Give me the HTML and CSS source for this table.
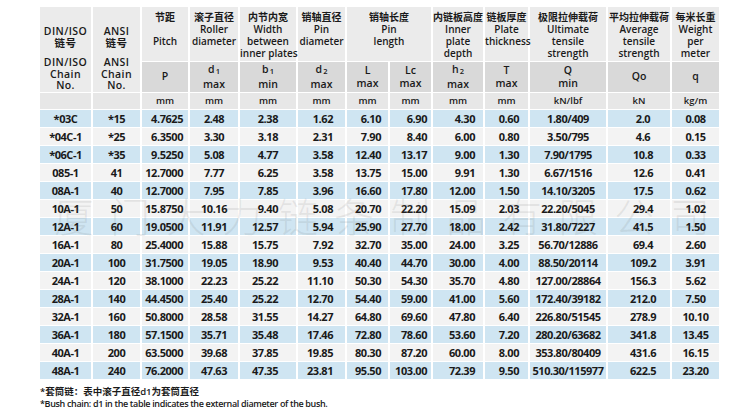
FILE: index.html
```html
<!DOCTYPE html>
<html lang="zh-CN">
<head>
<meta charset="utf-8">
<title>Chain specification</title>
<link rel="stylesheet" href="styles.css">
</head>
<body>
<div class="page">
  <div class="sheet">
    <table class="spec">
      <colgroup>
        <col class="w53"><col class="w49"><col class="w48"><col class="w50"><col class="w58"><col class="w49"><col class="w43"><col class="w43"><col class="w52"><col class="w45"><col class="w78"><col class="w64"><col class="w47">
      </colgroup>
      <thead>
        <tr class="hr1">
          <th rowspan="2" class="idcell">
            <div class="blk"><span class="ln">DIN/ISO</span><span class="ln">链号</span></div>
            <div class="blk low"><span class="ln">DIN/ISO</span><span class="ln">Chain</span><span class="ln">No.</span></div>
          </th>
          <th rowspan="2" class="idcell">
            <div class="blk"><span class="ln">ANSI</span><span class="ln">链号</span></div>
            <div class="blk low"><span class="ln">ANSI</span><span class="ln">Chain</span><span class="ln">No.</span></div>
          </th>
          <th><span class="ln">节距</span><span class="ln">&nbsp;</span><span class="ln">Pitch</span></th>
          <th><span class="ln">滚子直径</span><span class="ln">Roller</span><span class="ln">diameter</span></th>
          <th><span class="ln">内节内宽</span><span class="ln">Width</span><span class="ln">between</span><span class="ln">inner plates</span></th>
          <th><span class="ln">销轴直径</span><span class="ln">Pin</span><span class="ln">diameter</span></th>
          <th colspan="2"><span class="ln">销轴长度</span><span class="ln">Pin</span><span class="ln">length</span></th>
          <th><span class="ln">内链板高度</span><span class="ln">Inner</span><span class="ln">plate</span><span class="ln">depth</span></th>
          <th><span class="ln">链板厚度</span><span class="ln">Plate</span><span class="ln">thickness</span></th>
          <th><span class="ln">极限拉伸载荷</span><span class="ln">Ultimate</span><span class="ln">tensile</span><span class="ln">strength</span></th>
          <th><span class="ln">平均拉伸载荷</span><span class="ln">Average</span><span class="ln">tensile</span><span class="ln">strength</span></th>
          <th><span class="ln">每米长重</span><span class="ln">Weight</span><span class="ln">per</span><span class="ln">meter</span></th>
        </tr>
        <tr class="hr2">
          <th><span class="ln">P</span></th>
          <th><span class="ln">d<span class="sb">1</span></span><span class="ln">max</span></th>
          <th><span class="ln">b<span class="sb">1</span></span><span class="ln">min</span></th>
          <th><span class="ln">d<span class="sb">2</span></span><span class="ln">max</span></th>
          <th><span class="ln">L</span><span class="ln">max</span></th>
          <th><span class="ln">Lc</span><span class="ln">max</span></th>
          <th><span class="ln">h<span class="sb">2</span></span><span class="ln">max</span></th>
          <th><span class="ln">T</span><span class="ln">max</span></th>
          <th><span class="ln">Q</span><span class="ln">min</span></th>
          <th><span class="ln">Qo</span></th>
          <th><span class="ln">q</span></th>
        </tr>
        <tr class="hr3">
          <th></th><th></th>
          <th>mm</th><th>mm</th><th>mm</th><th>mm</th><th>mm</th><th>mm</th><th>mm</th><th>mm</th>
          <th>kN/lbf</th><th>kN</th><th>kg/m</th>
        </tr>
      </thead>
      <tbody>
        <tr><td>*03C</td><td>*15</td><td>4.7625</td><td>2.48</td><td>2.38</td><td>1.62</td><td>6.10</td><td>6.90</td><td>4.30</td><td>0.60</td><td>1.80/409</td><td>2.0</td><td>0.08</td></tr>
        <tr><td>*04C-1</td><td>*25</td><td>6.3500</td><td>3.30</td><td>3.18</td><td>2.31</td><td>7.90</td><td>8.40</td><td>6.00</td><td>0.80</td><td>3.50/795</td><td>4.6</td><td>0.15</td></tr>
        <tr><td>*06C-1</td><td>*35</td><td>9.5250</td><td>5.08</td><td>4.77</td><td>3.58</td><td>12.40</td><td>13.17</td><td>9.00</td><td>1.30</td><td>7.90/1795</td><td>10.8</td><td>0.33</td></tr>
        <tr><td>085-1</td><td>41</td><td>12.7000</td><td>7.77</td><td>6.25</td><td>3.58</td><td>13.75</td><td>15.00</td><td>9.91</td><td>1.30</td><td>6.67/1516</td><td>12.6</td><td>0.41</td></tr>
        <tr><td>08A-1</td><td>40</td><td>12.7000</td><td>7.95</td><td>7.85</td><td>3.96</td><td>16.60</td><td>17.80</td><td>12.00</td><td>1.50</td><td>14.10/3205</td><td>17.5</td><td>0.62</td></tr>
        <tr><td>10A-1</td><td>50</td><td>15.8750</td><td>10.16</td><td>9.40</td><td>5.08</td><td>20.70</td><td>22.20</td><td>15.09</td><td>2.03</td><td>22.20/5045</td><td>29.4</td><td>1.02</td></tr>
        <tr><td>12A-1</td><td>60</td><td>19.0500</td><td>11.91</td><td>12.57</td><td>5.94</td><td>25.90</td><td>27.70</td><td>18.00</td><td>2.42</td><td>31.80/7227</td><td>41.5</td><td>1.50</td></tr>
        <tr><td>16A-1</td><td>80</td><td>25.4000</td><td>15.88</td><td>15.75</td><td>7.92</td><td>32.70</td><td>35.00</td><td>24.00</td><td>3.25</td><td>56.70/12886</td><td>69.4</td><td>2.60</td></tr>
        <tr><td>20A-1</td><td>100</td><td>31.7500</td><td>19.05</td><td>18.90</td><td>9.53</td><td>40.40</td><td>44.70</td><td>30.00</td><td>4.00</td><td>88.50/20114</td><td>109.2</td><td>3.91</td></tr>
        <tr><td>24A-1</td><td>120</td><td>38.1000</td><td>22.23</td><td>25.22</td><td>11.10</td><td>50.30</td><td>54.30</td><td>35.70</td><td>4.80</td><td>127.00/28864</td><td>156.3</td><td>5.62</td></tr>
        <tr><td>28A-1</td><td>140</td><td>44.4500</td><td>25.40</td><td>25.22</td><td>12.70</td><td>54.40</td><td>59.00</td><td>41.00</td><td>5.60</td><td>172.40/39182</td><td>212.0</td><td>7.50</td></tr>
        <tr><td>32A-1</td><td>160</td><td>50.8000</td><td>28.58</td><td>31.55</td><td>14.27</td><td>64.80</td><td>69.60</td><td>47.80</td><td>6.40</td><td>226.80/51545</td><td>278.9</td><td>10.10</td></tr>
        <tr><td>36A-1</td><td>180</td><td>57.1500</td><td>35.71</td><td>35.48</td><td>17.46</td><td>72.80</td><td>78.60</td><td>53.60</td><td>7.20</td><td>280.20/63682</td><td>341.8</td><td>13.45</td></tr>
        <tr><td>40A-1</td><td>200</td><td>63.5000</td><td>39.68</td><td>37.85</td><td>19.85</td><td>80.30</td><td>87.20</td><td>60.00</td><td>8.00</td><td>353.80/80409</td><td>431.6</td><td>16.15</td></tr>
        <tr><td>48A-1</td><td>240</td><td>76.2000</td><td>47.63</td><td>47.35</td><td>23.81</td><td>95.50</td><td>103.00</td><td>72.39</td><td>9.50</td><td>510.30/115977</td><td>622.5</td><td>23.20</td></tr>
      </tbody>
    </table>
    <div class="watermark">厦门大力链条制品有限公司</div>
  </div>
  <p class="note note-cn">*套筒链：表中滚子直径d1为套筒直径</p>
  <p class="note note-en">*Bush chain: d1 in the table indicates the external diameter of the bush.</p>
</div>
</body>
</html>
```

FILE: styles.css
```css
html, body {
  margin: 0;
  padding: 0;
  background: #ffffff;
}

.page {
  padding: 7px 0 0 40px;
  font-family: "Open Sans", "Noto Sans CJK SC", sans-serif;
  color: #1e1e1e;
}

.sheet {
  position: relative;
  width: 679px;
}

.spec {
  width: 679px;
  table-layout: fixed;
  border-collapse: separate;
  border-spacing: 0;
}

.w53 { width: 53px; }
.w49 { width: 49px; }
.w48 { width: 48px; }
.w50 { width: 50px; }
.w58 { width: 58px; }
.w43 { width: 43px; }
.w52 { width: 52px; }
.w45 { width: 45px; }
.w78 { width: 78px; }
.w64 { width: 64px; }
.w47 { width: 47px; }

.spec th,
.spec td {
  border-right: 2px solid #ffffff;
  border-bottom: 1px solid #ffffff;
  padding: 0;
  white-space: nowrap;
  overflow: visible;
}

.spec th:last-child,
.spec td:last-child {
  border-right: 0;
}

.spec th {
  font-weight: 600;
  font-size: 10px;
  color: #1a1a1a;
  text-align: center;
}

.ln {
  display: block;
}

.hr1 th {
  height: 49px;
  padding-top: 4px;
  vertical-align: top;
  line-height: 12px;
  background: #ebebeb;
}

.hr1 th.idcell {
  padding-top: 19px;
  line-height: 11.5px;
  font-size: 10.5px;
  letter-spacing: 0.4px;
}

.blk.low {
  margin-top: 8px;
}

.hr2 th {
  height: 29px;
  vertical-align: middle;
  line-height: 13px;
  font-size: 10.5px;
  background: #d9d9d9;
}

.sb {
  font-size: 7.5px;
  vertical-align: -1px;
  margin-left: 1px;
}

.hr3 th {
  height: 16px;
  line-height: 16px;
  font-size: 9.5px;
  background: #e7e7e7;
}

.spec td {
  height: 17px;
  line-height: 17px;
  font-size: 11px;
  font-weight: 700;
  letter-spacing: -0.45px;
  color: #1a1a1a;
  background: #f3f3f3;
}

.spec tbody tr:nth-child(odd) td {
  background: #cfe5f2;
}

.spec td:nth-child(1),
.spec td:nth-child(2),
.spec td:nth-child(4),
.spec td:nth-child(11),
.spec td:nth-child(12),
.spec td:nth-child(13) {
  text-align: center;
}

.spec td:nth-child(12) { padding-left: 8px; }

.spec td:nth-child(3) { text-align: right; padding-right: 5px; }
.spec td:nth-child(5) { text-align: right; padding-right: 18px; }
.spec td:nth-child(6) { text-align: right; padding-right: 12px; }
.spec td:nth-child(7) { text-align: right; padding-right: 7px; }
.spec td:nth-child(8) { text-align: right; padding-right: 4px; }
.spec td:nth-child(9) { text-align: right; padding-right: 8px; }
.spec td:nth-child(10) { text-align: right; padding-right: 9px; }

.watermark {
  position: absolute;
  left: 14px;
  top: 186px;
  font-family: "Noto Sans CJK SC", sans-serif;
  font-weight: 300;
  font-size: 40px;
  line-height: 44px;
  letter-spacing: 16px;
  color: rgba(110, 110, 110, 0.12);
  white-space: nowrap;
  pointer-events: none;
}

.note {
  margin: 0;
  font-weight: 600;
  color: #1a1a1a;
  white-space: nowrap;
}

.note-cn {
  margin-top: 5px;
  font-size: 9.5px;
  line-height: 13px;
}

.note-en {
  font-size: 9px;
  line-height: 12px;
  letter-spacing: -0.35px;
}
```
